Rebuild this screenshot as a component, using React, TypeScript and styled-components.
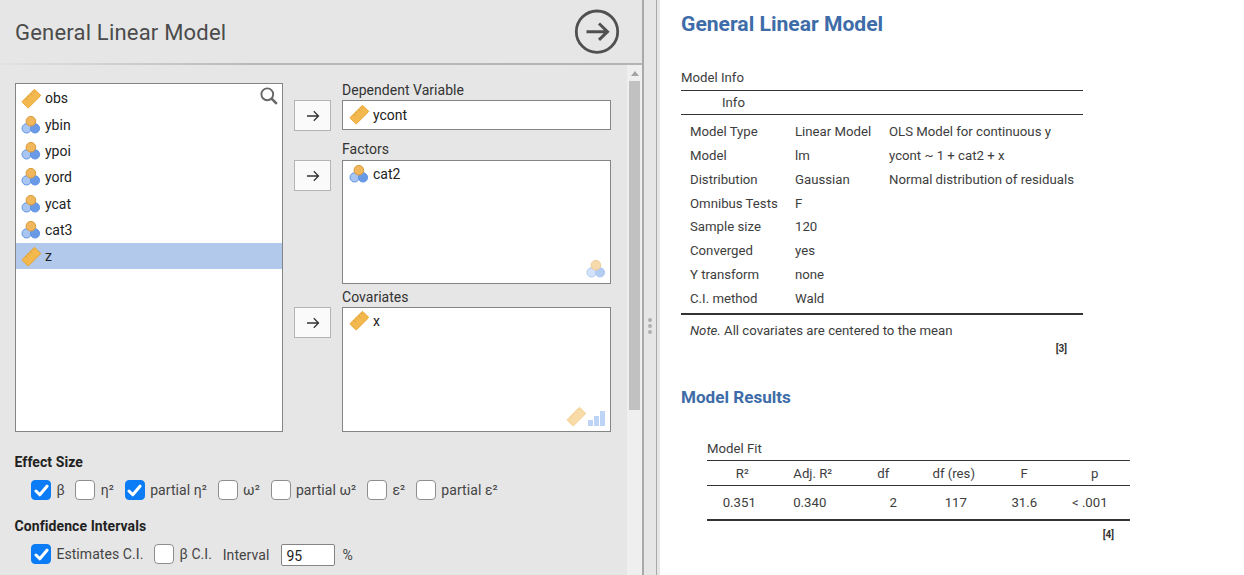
import React from 'react';
import styled, { createGlobalStyle } from 'styled-components';

const Global = createGlobalStyle`
  html, body { margin: 0; padding: 0; height: 100%; overflow: hidden; background: #e6e6e6; }
  * { box-sizing: border-box; }
`;

const Page = styled.div`
  display: flex; width: 1244px; height: 575px; overflow: hidden;
  background: #e6e6e6; font-family: Roboto, "Liberation Sans", sans-serif; color: #333;
`;
const Options = styled.section`
  width: 644px; height: 575px; flex: none; border-right: 2px solid #a9a9a9;
  display: flex; flex-direction: column;
`;
const Header = styled.header`
  height: 65px; flex: none; display: flex; align-items: flex-start; justify-content: space-between;
  padding: 9px 22px 0 15px;
  border-bottom: 2px solid; border-image: linear-gradient(90deg, #e2e2e2, #b8b8b8 40%, #b4b4b4) 1;
`;
const Title = styled.h1`
  margin: 11px 0 0; font-size: 22px; line-height: 26px; font-weight: 400; color: #4b4b4b; letter-spacing: .2px;
`;
const Body = styled.div`display: flex; flex: 1; min-height: 0; overflow: hidden;`;
const Content = styled.div`flex: 1; padding: 18px 16px 0 15px; min-width: 0;`;
const Scrollbar = styled.div`
  width: 15px; flex: none; background: #efefef; display: flex; flex-direction: column; align-items: center; padding-top: 6px;
`;
const ScrollUp = styled.div`
  width: 0; height: 0; border-left: 4px solid transparent; border-right: 4px solid transparent;
  border-bottom: 5px solid #a3a3a3; margin-bottom: 5px;
`;
const Thumb = styled.div`width: 11px; height: 329px; background: #c1c1c1;`;
const Supplier = styled.div`display: flex; align-items: flex-start;`;
const ListBox = styled.div`
  position: relative; width: 268px; height: 349px; flex: none; background: #fff; border: 1px solid #858585; padding-top: 1.2px;
`;
const SearchIcon = styled.span`position: absolute; top: 3px; right: 4px; display: flex;`;
const Row = styled.div<{ $selected?: boolean }>`
  height: 26.3px; display: flex; align-items: center; gap: 4px; padding-left: 5px;
  font-size: 14px; color: #222; background: ${p => (p.$selected ? '#b3c9ec' : 'transparent')};
`;
const Targets = styled.div`display: flex; flex-direction: column; margin-left: 11px; margin-top: -2px;`;
const TargetGroup = styled.div<{ $gap: number }>`display: flex; align-items: flex-start; margin-bottom: ${p => p.$gap}px;`;
const MoveButton = styled.button<{ $top: number }>`
  width: 37px; height: 31px; margin-top: ${p => p.$top}px; margin-right: 11px; flex: none; padding: 0;
  display: flex; align-items: center; justify-content: center;
  background: #fafafa; border: 1px solid #b4b4b4;
`;
const TargetColumn = styled.div`width: 269px;`;
const TargetLabel = styled.div<{ $top: number; $bottom: number }>`
  font-size: 14px; line-height: 17px; color: #333; letter-spacing: .03px;
  margin: ${p => p.$top}px 0 ${p => p.$bottom}px;
`;
const TargetBox = styled.div<{ $height: number }>`
  position: relative; height: ${p => p.$height}px; background: #fff; border: 1px solid #858585;
`;
const TargetRow = styled(Row)<{ $h: number }>`height: ${p => p.$h}px; padding-left: 6px; gap: 4px;`;
const Hint = styled.div<{ $right: number }>`
  position: absolute; right: ${p => p.$right}px; bottom: 4px; display: flex; align-items: flex-end; gap: 2px;
`;
const SectionTitle = styled.h3<{ $top: number }>`
  margin: ${p => p.$top}px 0 0 -.5px; font-size: 14px; line-height: 17px; font-weight: 700; color: #222; letter-spacing: .08px;
`;
const CheckRow = styled.div`display: flex; align-items: center; margin: 8px 0 0 16px; height: 22px;`;
const Check = styled.label`
  display: flex; align-items: center; gap: 5.4px; margin-right: 10.7px; font-size: 14px; color: #444; white-space: nowrap; letter-spacing: .07px;
`;
const Box = styled.span<{ $on?: boolean }>`
  width: 20px; height: 20px; flex: none; border-radius: 4px; display: flex; align-items: center; justify-content: center;
  background: ${p => (p.$on ? '#0b7cf5' : '#fff')};
  border: 1px solid ${p => (p.$on ? '#0b7cf5' : '#8e8e8e')};
`;
const FieldLabel = styled.span`font-size: 14px; color: #444; margin: 2px 12px 0 0; letter-spacing: .07px;`;
const NumberBox = styled.span`
  width: 54px; height: 22px; margin-top: 2px; background: #fff; border: 1px solid #858585; border-radius: 2px;
  padding-left: 4px; font-size: 14px; line-height: 22px; color: #222; margin-right: 7px;
`;
const Splitter = styled.div`
  width: 13px; flex: none; border-right: 1px solid #a9a9a9; display: flex; flex-direction: column;
  align-items: center; justify-content: center; gap: 2px; padding-top: 76px; padding-right: 1px;
`;
const Dot = styled.i`width: 4px; height: 4px; border-radius: 50%; background: #b0b0b0;`;
const Results = styled.main`
  flex: 1; margin-left: 3px; background: #fff; padding: 11px 0 0 21px; color: #3d3d3d;
`;
const H1 = styled.h2`margin: 0; font-size: 21.1px; line-height: 25px; font-weight: 700; color: #3e6ca8;`;
const H2 = styled.h2`margin: 32px 0 0; font-size: 17.1px; line-height: 20px; font-weight: 700; color: #3e6ca8;`;
const TableTitle = styled.div`font-size: 13.2px; line-height: 16px; color: #3d3d3d;`;
const InfoBlock = styled.div`width: 402px; margin-top: 34px;`;
const FitBlock = styled.div`width: 423px; margin: 34px 0 0 26px;`;
const Table = styled.table<{ $top: number }>`
  border-collapse: collapse; width: 100%; font-size: 13.2px; color: #3d3d3d; margin-top: ${p => p.$top}px; table-layout: fixed;
`;
const Col = styled.col<{ $w: number }>`width: ${p => p.$w}px;`;
const Th = styled.th<{ $pad?: number }>`
  font-weight: 400; height: 24px; padding: 0; padding-left: ${p => p.$pad ?? 0}px; text-align: left;
  border-top: 1px solid #333; border-bottom: 1px solid #333;
`;
const Spacer = styled.tr<{ $h: number }>`height: ${p => p.$h}px;`;
const Td = styled.td`height: 23.86px; padding: 0 0 0 9px; white-space: nowrap;`;
const FitTh = styled.th`font-weight: 400; height: 25px; padding: 0; text-align: center; border-top: 1px solid #333; border-bottom: 1px solid #333;`;
const FitTd = styled.td<{ $l: number; $r: number }>`
  height: 34px; padding: 0 ${p => p.$r}px 0 ${p => p.$l}px; text-align: center; border-bottom: 2px solid #333;
`;
const Foot = styled.td`height: 29px; padding: 8px 9px 0; vertical-align: top; border-top: 2px solid #333;`;
const Ref = styled.div<{ $right: number; $top?: number }>`
  font-size: 10px; font-weight: 700; text-align: right; padding-right: ${p => p.$right}px; line-height: 12px; color: #333;
  margin-top: ${p => p.$top ?? 0}px;
`;

const Ruler = ({ faded }: { faded?: boolean }) => (
  <svg width="21" height="21" viewBox="0 0 21 21" style={{ opacity: faded ? 0.5 : 1, flex: 'none', margin: '0 -1px 0 0' }}>
    <path d="M1.400 13.300 13 1.700a.7.7 0 0 1 1 0l5.300 5.300a.7.7 0 0 1 0 1L7.700 19.600a.7.7 0 0 1-1 0l-5.300-5.300a.7.7 0 0 1 0-1z" fill="#f3b94f" stroke="#e9a32c" strokeWidth="1" />
    <path d="M4.600 10.200l2 2M7 7.800l1.400 1.400M9.400 5.400l2 2M11.800 3l1.400 1.400" stroke="#d49a3a" strokeWidth=".9" />
  </svg>
);
const Nominal = ({ faded }: { faded?: boolean }) => (
  <svg width="20" height="20" viewBox="0 0 20 20" style={{ opacity: faded ? 0.5 : 1, flex: 'none' }}>
    <circle cx="5.600" cy="13.400" r="4.600" fill="#a9c6f2" stroke="#5f94e6" strokeWidth="1" />
    <circle cx="14" cy="13.400" r="4.600" fill="#6a9ae6" stroke="#5f94e6" strokeWidth="1" />
    <circle cx="9.900" cy="6.200" r="4.800" fill="#f0b75c" stroke="#d99a38" strokeWidth="1" />
  </svg>
);
const Bars = () => (
  <svg width="17" height="17" viewBox="0 0 17 17" style={{ opacity: 0.5 }}>
    <rect x="0" y="10" width="5" height="6" fill="#7eaaf0" />
    <rect x="6" y="6" width="5" height="10" fill="#7eaaf0" />
    <rect x="12" y="1" width="5" height="15" fill="#7eaaf0" />
  </svg>
);
const SmallArrow = () => (
  <svg width="14" height="12" viewBox="0 0 14 12">
    <path d="M1 6h11.500M7.800 1.300 12.500 6l-4.700 4.700" fill="none" stroke="#333" strokeWidth="1.300" />
  </svg>
);
const BigArrow = () => (
  <svg width="46" height="46" viewBox="0 0 46 46">
    <circle cx="23" cy="22.700" r="20.700" fill="none" stroke="#505050" strokeWidth="2.800" />
    <path d="M12.500 22.700h21M25 14.500 33.500 22.700 25 30.900" fill="none" stroke="#505050" strokeWidth="3" />
  </svg>
);
const Tick = () => (
  <svg width="15" height="13" viewBox="0 0 15 13">
    <path d="M2 7 5.800 10.800 13 2.200" fill="none" stroke="#fff" strokeWidth="3" strokeLinecap="round" strokeLinejoin="round" />
  </svg>
);
const Magnifier = () => (
  <svg width="18" height="18" viewBox="0 0 18 18">
    <circle cx="7.300" cy="7.300" r="5.900" fill="none" stroke="#666" strokeWidth="1.900" />
    <path d="M11.600 11.600 16.800 16.800" stroke="#666" strokeWidth="2.600" />
  </svg>
);

const vars: [string, 'r' | 'n', boolean?][] = [
  ['obs', 'r'], ['ybin', 'n'], ['ypoi', 'n'], ['yord', 'n'], ['ycat', 'n'], ['cat3', 'n'], ['z', 'r', true],
];
const info = [
  ['Model Type', 'Linear Model', 'OLS Model for continuous y'],
  ['Model', 'lm', 'ycont ~ 1 + cat2 + x'],
  ['Distribution', 'Gaussian', 'Normal distribution of residuals'],
  ['Omnibus Tests', 'F', ''],
  ['Sample size', '120', ''],
  ['Converged', 'yes', ''],
  ['Y transform', 'none', ''],
  ['C.I. method', 'Wald', ''],
];
const effects: [string, boolean][] = [['β', true], ['η²', false], ['partial η²', true], ['ω²', false], ['partial ω²', false], ['ε²', false], ['partial ε²', false]];
const fitHead = ['R²', 'Adj. R²', 'df', 'df (res)', 'F', 'p'];
const fitRow: [string, number, number][] = [['0.351', 0, 6], ['0.340', 0, 6], ['2', 20, 0], ['117', 4, 0], ['31.6', 0, 0], ['< .001', 0, 10]];

export default function App() {
  return (
    <Page>
      <Global />
      <Options>
        <Header>
          <Title>General Linear Model</Title>
          <BigArrow />
        </Header>
        <Body>
          <Content>
            <Supplier>
              <ListBox>
                <SearchIcon><Magnifier /></SearchIcon>
                {vars.map(([n, t, s]) => (
                  <Row key={n} $selected={s}>{t === 'r' ? <Ruler /> : <Nominal />}{n}</Row>
                ))}
              </ListBox>
              <Targets>
                <TargetGroup $gap={10}>
                  <MoveButton $top={19}><SmallArrow /></MoveButton>
                  <TargetColumn>
                    <TargetLabel $top={1} $bottom={1}>Dependent Variable</TargetLabel>
                    <TargetBox $height={30}><TargetRow $h={27}><Ruler />ycont</TargetRow></TargetBox>
                  </TargetColumn>
                </TargetGroup>
                <TargetGroup $gap={5}>
                  <MoveButton $top={19}><SmallArrow /></MoveButton>
                  <TargetColumn>
                    <TargetLabel $top={0} $bottom={2}>Factors</TargetLabel>
                    <TargetBox $height={124}>
                      <TargetRow $h={25}><Nominal />cat2</TargetRow>
                      <Hint $right={4}><Nominal faded /></Hint>
                    </TargetBox>
                  </TargetColumn>
                </TargetGroup>
                <TargetGroup $gap={0}>
                  <MoveButton $top={18}><SmallArrow /></MoveButton>
                  <TargetColumn>
                    <TargetLabel $top={0} $bottom={1}>Covariates</TargetLabel>
                    <TargetBox $height={125}>
                      <TargetRow $h={25}><Ruler />x</TargetRow>
                      <Hint $right={5}><Ruler faded /><Bars /></Hint>
                    </TargetBox>
                  </TargetColumn>
                </TargetGroup>
              </Targets>
            </Supplier>
            <SectionTitle $top={22}>Effect Size</SectionTitle>
            <CheckRow>
              {effects.map(([l, on]) => (
                <Check key={l}><Box $on={on}>{on && <Tick />}</Box>{l}</Check>
              ))}
            </CheckRow>
            <SectionTitle $top={17}>Confidence Intervals</SectionTitle>
            <CheckRow>
              <Check><Box $on><Tick /></Box>Estimates C.I.</Check>
              <Check><Box />β C.I.</Check>
              <FieldLabel>Interval</FieldLabel>
              <NumberBox>95</NumberBox>
              <FieldLabel>%</FieldLabel>
            </CheckRow>
          </Content>
          <Scrollbar><ScrollUp /><Thumb /></Scrollbar>
        </Body>
      </Options>
      <Splitter><Dot /><Dot /><Dot /></Splitter>
      <Results>
        <H1>General Linear Model</H1>
        <InfoBlock>
          <TableTitle>Model Info</TableTitle>
          <Table $top={4}>
            <colgroup><Col $w={105} /><Col $w={94} /><Col $w={203} /></colgroup>
            <thead><tr><Th $pad={41} colSpan={3}>Info</Th></tr></thead>
            <tbody>
              <Spacer $h={5} />
              {info.map(r => (
                <tr key={r[0]}><Td>{r[0]}</Td><Td>{r[1]}</Td><Td>{r[2]}</Td></tr>
              ))}
              <Spacer $h={4} />
              <tr><Foot colSpan={3}><em>Note.</em> All covariates are centered to the mean</Foot></tr>
            </tbody>
          </Table>
          <Ref $right={16}>[3]</Ref>
        </InfoBlock>
        <H2>Model Results</H2>
        <FitBlock>
          <TableTitle>Model Fit</TableTitle>
          <Table $top={3}>
            <thead><tr>
              {fitHead.map(h => <FitTh key={h}>{h}</FitTh>)}
            </tr></thead>
            <tbody><tr>
              {fitRow.map(([v, l, r]) => <FitTd key={v} $l={l} $r={r}>{v}</FitTd>)}
            </tr></tbody>
          </Table>
          <Ref $right={16} $top={8}>[4]</Ref>
        </FitBlock>
      </Results>
    </Page>
  );
}
